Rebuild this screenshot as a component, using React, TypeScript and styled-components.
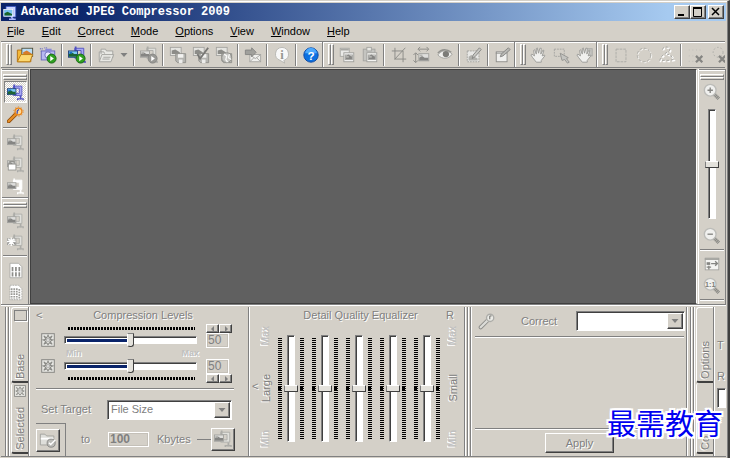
import React, { ReactNode } from "react";
import styled, { createGlobalStyle, css } from "styled-components";

const face = "#d4d0c8";
const shade = "#808080";
const dark = "#404040";
const navy = "#0a246a";
const ui = '"Liberation Sans", Arial, sans-serif';

const GlobalStyle = createGlobalStyle`
  *, *::before, *::after { box-sizing: border-box; }
  html, body { margin: 0; padding: 0; }
  body { background: ${face}; font: 11px/13px ${ui}; color: #000; }
  button, input, select { font: inherit; margin: 0; border-radius: 0; }
`;

const raised = css`
  border: 1px solid;
  border-color: #fff ${dark} ${dark} #fff;
  box-shadow: inset -1px -1px 0 ${shade};
`;
const sunken = css`
  border: 1px solid;
  border-color: ${shade} #fff #fff ${shade};
  box-shadow: inset 1px 1px 0 ${dark};
`;
const embossed = css`
  color: ${shade};
  text-shadow: 1px 1px 0 #fff;
`;

/* ---------- icons ---------- */

function Photo({ x = 1, y = 4, w = 10, h = 7, color = false }) {
  return (
    <g>
      <rect x={x} y={y} width={w} height={h} fill={color ? "#7cc8f4" : "#dededc"} stroke={color ? "#1c3c78" : "#a2a29e"} />
      <path
        d={`M${x + 0.5} ${y + h - 0.5}v-3l3-2 3 2 ${w - 7} 0v3z`}
        fill={color ? "#1c6434" : "#858583"}
      />
      <rect x={x + 1} y={y + 1} width={3} height={2} fill={color ? "#1870c8" : "#b4b4b0"} />
    </g>
  );
}

function Clamp({ color = false, pale = false }) {
  const edge = color ? "#5050c0" : pale ? "#fff" : "#acaca8";
  const fill = color ? "#a8a8f4" : pale ? "#fff" : "#e0e0dc";
  return (
    <g>
      <path d="M7.500 2.500h10v11h-10v-2.500h7v-6h-7z" fill={fill} stroke={edge} />
      <path d="M8.500 0.500v5M16 14v4" fill="none" stroke={edge} strokeWidth="2" />
      <path d="M12.500 19v-1.500h6.500V19" fill="none" stroke={edge} strokeWidth="1.500" />
      <Photo x={0.5} y={5.5} w={10} h={7} color={color} />
    </g>
  );
}

function Play({ color = false }) {
  return (
    <g>
      <circle cx="14" cy="14" r="5" fill={color ? "#30a020" : "#999996"} stroke={color ? "#146410" : "#858582"} />
      <path d="M12.500 11l4 3-4 3z" fill="#fff" />
    </g>
  );
}

function Floppy() {
  return (
    <g>
      <rect x="1.500" y="1.500" width="12" height="9" fill="#e4e4e0" stroke="#a4a4a0" />
      <path d="M3 9V5l4-1 5 3v2z" fill="#8c8c88" />
      <path d="M7.500 8.500h11v10h-9l-2-2z" fill="#b4b4b0" stroke="#8e8e8a" />
      <rect x="10" y="9" width="6" height="4" fill="#f2f2f0" />
      <rect x="11" y="15" width="4" height="4" fill="#ececea" />
    </g>
  );
}

const hand = (
  <path
    d="M7 18l-4-5-2-3 1-1 3 2-1-6 1-1 2 5V3l1-1 1.500 6L11 2.500l1.500 0L12 9l2.500-4.500 1 .5-2 6 2.500-1 .5 1-4 5v2z"
    fill="#f0f0ee"
    stroke="#999995"
  />
);

function Magnifier({ children }: { children: ReactNode }) {
  return (
    <g>
      <path d="M12.500 12.500l5 5" stroke="#8a8a86" strokeWidth="4" strokeDasharray="1.500 .5" />
      <circle cx="8" cy="8" r="6.500" fill="#f0f0ee" stroke="#bcbcb8" strokeWidth="1.500" />
      {children}
    </g>
  );
}

const icons: Record<string, ReactNode> = {
  app: (
    <g>
      <path d="M4 2h13v14h-7v-3h3V6H4z" fill="#c8d4ff" stroke="#3450c0" />
      <rect x="1" y="6" width="12" height="9" fill="#78c0f0" stroke="#fff" />
      <path d="M2 14v-3l4-2 6 3v2z" fill="#186428" />
      <path d="M8 19h9M11 16l3 3" stroke="#a8b4ff" strokeWidth="2" />
    </g>
  ),
  open: (
    <g>
      <path d="M1.500 17.500V4.500h5l2 2h8v11z" fill="#f4b838" stroke="#b06c10" />
      <rect x="6.500" y="2.500" width="12" height="9" fill="#b8dcf4" stroke="#50503c" />
      <path d="M8 11V7l4-2 6 4v2z" fill="#d87c28" />
      <path d="M1.500 17.500l4-8h13l-3 8z" fill="#fcd870" stroke="#b87810" />
    </g>
  ),
  camera: (
    <g>
      <path d="M1 3h3M6 2h3M2 6h2" stroke="#7070c0" strokeWidth="1.500" strokeDasharray="1 1" />
      <rect x="2.500" y="5.500" width="15" height="10" fill="#b8b8f0" stroke="#6464b8" />
      <rect x="7" y="3" width="7" height="3" fill="#8888d8" />
      <circle cx="10" cy="10" r="3.500" fill="#e8e8ff" stroke="#6464b8" />
      <Play color />
    </g>
  ),
  compress: <g><Clamp color /><Play color /></g>,
  folder: (
    <g fill="#e8e8e4" stroke="#a2a29e">
      <path d="M4.500 9V3.500h5l1 2h7V13M2.500 16V6.500h5l1 2" />
      <path d="M2.500 17.500l3-8h13l-3 8z" />
      <path d="M7 12.500h8M6 14.500h8" />
    </g>
  ),
  play: <g><Clamp /><Play /></g>,
  save: <Floppy />,
  saveCheck: <g><Floppy /><path d="M6 9l3 5 9-12" fill="none" stroke="#777774" strokeWidth="2" /></g>,
  saveWeb: (
    <g>
      <Floppy />
      <circle cx="13" cy="13" r="5.500" fill="#c4c4c0" stroke="#8c8c88" />
      <path d="M10 9l3 2-1 4 2 3M16 9l-1 4 3 2" stroke="#f8f8f6" strokeWidth="1.500" fill="none" />
    </g>
  ),
  mail: (
    <g>
      <rect x="6.500" y="9.500" width="12" height="8" fill="#f0f0ee" stroke="#a4a4a0" />
      <path d="M7 10l5.500 4 5.500-4M7 17l4-4M18 17l-4-4" fill="none" stroke="#a4a4a0" />
      <path d="M1.500 4.500h7V2l5 5-5 5V9.500h-7z" fill="#a0a09c" stroke="#858582" />
    </g>
  ),
  info: (
    <g>
      <path d="M10 1.500a8 7.500 0 0 1 2 14.500l1 3-5-3a8 7.500 0 0 1 2-14.500z" fill="#f8f8f8" stroke="#b4b4b0" />
      <text x="10" y="14" textAnchor="middle" fontFamily="Liberation Serif, serif" fontWeight="700" fontSize="14" fill="#969692">i</text>
    </g>
  ),
  help: (
    <g>
      <circle cx="10" cy="10" r="8" fill="#0c70e0" stroke="#0844a0" />
      <path d="M3.500 8a6.500 6 0 0 1 13 0z" fill="#4ca8fc" />
      <text x="10" y="15" textAnchor="middle" fontFamily="Liberation Sans, sans-serif" fontWeight="700" fontSize="13" fill="#fff">?</text>
    </g>
  ),
  copy: (
    <g>
      <rect x="2.500" y="2.500" width="10" height="9" fill="#eaeae8" stroke="#a8a8a4" />
      <path d="M3 4h9" stroke="#a8a8a4" strokeWidth="2" />
      <rect x="6.500" y="7.500" width="11" height="10" fill="#eee" stroke="#a0a09c" />
      <Photo x={8} y={10} w={8} h={5} />
    </g>
  ),
  paste: (
    <g>
      <rect x="2.500" y="3.500" width="13" height="13" fill="#c4c4c0" stroke="#a4a4a0" />
      <rect x="6.500" y="1.500" width="5" height="4" fill="#e8e8e4" stroke="#a4a4a0" />
      <rect x="6.500" y="7.500" width="11" height="10" fill="#f4f4f2" stroke="#a0a09c" />
      <Photo x={8} y={10} w={8} h={5} />
    </g>
  ),
  crop: <path d="M5.500 2v12.500H18M2 5.500h12.500V18M5 15L17 2" fill="none" stroke="#888884" />,
  resize: (
    <g>
      <Photo x={6.5} y={8.5} w={11} h={8} />
      <path d="M6 3.500h11M8 1L5.500 3.500 8 6M15 1l2.500 2.500L15 6M3 8v10M.5 10L3 7.500 5.500 10M.5 16L3 18.500 5.500 16" fill="none" stroke="#888884" />
    </g>
  ),
  eye: (
    <g>
      <path d="M2 10c4-6 11-6 16-1-4 6-11 6-16 1z" fill="#f0f0ee" stroke="#a0a09c" />
      <circle cx="11" cy="9" r="3.500" fill="#7c7c78" />
      <path d="M2 8c4-5 10-5 15-1" fill="none" stroke="#92928e" strokeWidth="1.500" />
    </g>
  ),
  penPhoto: (
    <g>
      <rect x="2.500" y="5.500" width="13" height="12" fill="#e8e8e6" stroke="#a0a09c" strokeDasharray="2 1" />
      <path d="M4 16v-4l3-2 7 4v2z" fill="#b0b0ac" />
      <path d="M8 14l1-4 7-8 2 2-7 8z" fill="#c8c8c4" stroke="#858582" />
    </g>
  ),
  penBox: (
    <g>
      <rect x="2.500" y="6.500" width="12" height="11" fill="#f0f0ee" stroke="#8c8c88" />
      <path d="M2 8h12" stroke="#8c8c88" />
      <path d="M7 12l1-3 8-7 2 2-8 7z" fill="#b8b8b4" stroke="#858582" />
    </g>
  ),
  hand,
  select: (
    <g>
      <rect x="1.500" y="3.500" width="11" height="8" fill="none" stroke="#a4a4a0" strokeDasharray="2 1" />
      <path d="M8 8l9 5-2 1 3 4-2 1-3-4-3 1z" fill="#c4c4c0" stroke="#92928e" />
    </g>
  ),
  handBox: <g><rect x="11" y="3" width="7" height="8" fill="#c4c4c0" stroke="#aaaaa6" />{hand}</g>,
  rect: <rect x="4.500" y="3.500" width="11" height="14" fill="none" stroke="#aaaaa6" strokeDasharray="3 1" />,
  ellipse: (
    <g fill="none" strokeDasharray="3 2">
      <circle cx="11" cy="11" r="7.500" stroke="#fff" />
      <circle cx="10" cy="10" r="7.500" stroke="#aaaaa6" />
    </g>
  ),
  lasso: (
    <g fill="none" strokeDasharray="3 2">
      <path d="M6 5a4 3 0 1 1 5 3c-3 2-7 4-8 9h11l4-1-3-5-4-1" stroke="#fff" strokeWidth="2" />
      <path d="M5 4a4 3 0 1 1 5 3c-3 2-7 4-8 9h11l4-1-3-5-4-1" stroke="#a4a4a0" />
    </g>
  ),
  clearRect: (
    <g>
      <path d="M2 4.500h14M2 11h8M2 17h8" stroke="#bcbcb8" strokeDasharray="1 3" />
      <path d="M10 11l7 7m0-7l-7 7" stroke="#858582" strokeWidth="2.500" />
    </g>
  ),
  clearLasso: (
    <g>
      <circle cx="9" cy="7" r="5.500" fill="none" stroke="#aaaaa6" strokeDasharray="2 2" />
      <path d="M10 11l7 7m0-7l-7 7" stroke="#858582" strokeWidth="2.500" />
    </g>
  ),
  clampOn: <Clamp color />,
  wand: (
    <g>
      <path d="M2 18L11 9" stroke="#94500c" strokeWidth="4.500" strokeLinecap="round" />
      <path d="M2 18L11 9" stroke="#e89028" strokeWidth="2.500" strokeLinecap="round" />
      <circle cx="13.500" cy="6.500" r="4" fill="#ffd898" stroke="#e88418" strokeWidth="1.500" />
      <circle cx="13.500" cy="6.500" r="5.500" fill="none" stroke="#e88418" strokeDasharray="1.500 2" />
      <path d="M12 9V6l2-2" stroke="#3848b0" strokeWidth="1.500" fill="none" />
    </g>
  ),
  clamp: <Clamp />,
  clampLock: (
    <g>
      <Clamp />
      <rect x="1.500" y="9.500" width="9" height="7" fill="#fff" stroke="#92928e" />
      <path d="M3.500 9V6.500h5V9" fill="none" stroke="#92928e" strokeWidth="1.500" />
    </g>
  ),
  clampPale: <Clamp pale />,
  clampSpark: (
    <g><Clamp /><path d="M5 4v10M0 9h10M1.500 5.500l7 7m0-7l-7 7" stroke="#fff" strokeWidth="1.500" /></g>
  ),
  page: (
    <g>
      <path d="M3.500 1.500h10l4 4v13h-14z" fill="#fff" stroke="#a8a8a4" />
      <path d="M6.500 6v11M10.500 6v11M14.500 6v11" stroke="#8c8c88" strokeWidth="2" strokeDasharray="5 1" />
    </g>
  ),
  pageDots: (
    <g>
      <path d="M3.500 1.500h10l4 4v13h-14z" fill="#fff" stroke="#a8a8a4" strokeDasharray="2 1" />
      <path d="M5.500 5v13M8.500 5v13M11.500 5v13M14.500 6v12" stroke="#9a9a96" strokeWidth="2" strokeDasharray="2 1" />
    </g>
  ),
  zoomIn: <Magnifier><path d="M8 5v6M5 8h6" stroke="#858582" strokeWidth="1.500" /></Magnifier>,
  zoomOut: <Magnifier><path d="M5 8h6" stroke="#858582" strokeWidth="1.500" /></Magnifier>,
  zoomOne: (
    <Magnifier>
      <text x="8" y="11" textAnchor="middle" fontFamily="Liberation Sans, sans-serif" fontWeight="700" fontSize="8" fill="#7c7c78">1:1</text>
    </Magnifier>
  ),
  fit: (
    <g>
      <rect x="2.500" y="3.500" width="15" height="13" fill="#f4f4f2" stroke="#a4a4a0" />
      <path d="M2 4.500h16" stroke="#a4a4a0" strokeWidth="2" />
      <rect x="4" y="8" width="4" height="3" fill="#858582" />
      <path d="M9 9.500h7M13.500 7l2.500 2.500-2.500 2.500M6.500 12v4M4 13.500h5" fill="none" stroke="#858582" strokeWidth="1.500" />
    </g>
  ),
  wrench: (
    <g>
      <path d="M3 17l8-8" stroke="#8c8c88" strokeWidth="4.500" strokeLinecap="round" />
      <path d="M3 17l8-8" stroke="#dcdcd8" strokeWidth="2.500" strokeLinecap="round" />
      <circle cx="13.500" cy="6.500" r="4" fill="#ecece8" stroke="#acaca8" strokeWidth="1.500" />
      <path d="M13 8V5l2-1" stroke="#8c8c88" strokeWidth="1.500" fill="none" />
    </g>
  ),
  flower: (
    <g fill="#e8e8e4" stroke="#8a8a86">
      <rect x="1" y="1" width="18" height="18" strokeWidth="1.500" />
      <path d="M10 3l2 4 4-3-3 5 4 1-4 2 3 4-4-2-2 3-2-3-4 2 3-4-4-2 4-1-3-5 4 3z" strokeWidth="1.500" />
      <circle cx="10" cy="10" r="2" fill="#fff" />
    </g>
  ),
  folderCheck: (
    <g>
      <path d="M1.500 15.500v-12h5l2 2h8v10z" fill="#dededa" stroke="#a0a09c" />
      <path d="M2 8.500h14" stroke="#fff" strokeWidth="2" />
      <circle cx="13.500" cy="13.500" r="4.500" fill="#bcbcb8" stroke="#858582" />
      <path d="M11 13l2 2 5-5" fill="none" stroke="#fff" strokeWidth="1.500" />
    </g>
  ),
};

const IconSvg = styled.svg<{ $size: number }>`
  display: block;
  flex: none;
  width: ${(p) => p.$size}px;
  height: ${(p) => p.$size}px;
`;
const Icon = ({ name, size = 18 }: { name: string; size?: number }) => (
  <IconSvg viewBox="0 0 20 20" $size={size} aria-hidden="true">{icons[name]}</IconSvg>
);

const Arrow = ({ dir }: { dir: "left" | "right" | "down" }) => (
  <IconSvg viewBox="0 0 8 8" $size={8} aria-hidden="true">
    <path d={{ left: "M5 1v6L2 4z", right: "M3 1v6L6 4z", down: "M0.500 2h7L4 6z" }[dir]} fill={shade} />
  </IconSvg>
);

/* ---------- window frame ---------- */

const AppWindow = styled.div`
  position: relative;
  display: flex;
  flex-direction: column;
  min-height: 100vh;
  padding: 1px 2px 1px 1px;
  overflow: hidden;
  background: ${face};
  border-top: 1px solid ${face};
  border-right: 2px solid ${dark};
  box-shadow: inset -1px 0 0 ${shade}, inset 0 1px 0 #fff;
`;

const TitleBar = styled.header`
  display: flex;
  align-items: center;
  height: 18px;
  margin-top: 1px;
  padding: 0 2px;
  gap: 3px;
  color: #fff;
  background: linear-gradient(90deg, ${navy} 10%, #a6caf0 92%);
`;
const AppTitle = styled.h1`
  flex: 1;
  margin: 0;
  font: 700 12px/18px "Liberation Mono", monospace;
  white-space: nowrap;
`;
const Caption = styled.div`
  display: flex;
`;
const CaptionButton = styled.button<{ $apart?: boolean }>`
  ${raised}
  display: grid;
  place-items: center;
  width: 16px;
  height: 14px;
  margin-left: ${(p) => (p.$apart ? 2 : 0)}px;
  padding: 0;
  background: ${face};
  svg { display: block; }
`;

const MenuBar = styled.nav`
  display: flex;
  gap: 17px;
  height: 20px;
  padding: 0 6px;
`;
const MenuItem = styled.button`
  padding: 0;
  border: 0;
  background: none;
  font-size: 11px;
  line-height: 20px;
`;

/* ---------- tool bars ---------- */

const ToolBar = styled.div`
  display: flex;
  height: 27px;
  margin-right: 1px;
  overflow: hidden;
  border-top: 1px solid ${shade};
  border-bottom: 1px solid ${shade};
  box-shadow: inset 0 1px 0 #fff;
`;
const Band = styled.div<{ $vertical?: boolean }>`
  display: flex;
  flex: none;
  flex-direction: ${(p) => (p.$vertical ? "column" : "row")};
  align-items: center;
  ${(p) =>
    p.$vertical
      ? css`
          border-top: 1px solid ${shade};
          box-shadow: inset 0 1px 0 #fff;
        `
      : css`
          border-right: 1px solid ${shade};
          box-shadow: inset 1px 1px 0 #fff;
        `}
`;
const bar = css`
  border: 1px solid;
  border-color: #fff ${shade} ${shade} #fff;
`;
const Grip = styled.span<{ $vertical?: boolean }>`
  display: flex;
  flex: none;
  flex-direction: ${(p) => (p.$vertical ? "column" : "row")};
  ${(p) => (p.$vertical ? "width: 24px; height: 11px; padding: 4px 0 1px;" : "width: 12px; height: 21px; padding: 0 1px 0 5px;")}
  &::before, &::after { content: ""; flex: 1; ${bar} }
`;
const ToolButton = styled.button<{ $rail?: boolean; $on?: boolean }>`
  display: grid;
  place-items: center;
  flex: none;
  width: 23px;
  height: ${(p) => (p.$rail ? 22 : 24)}px;
  padding: 0;
  border: 0;
  background: none;
  ${(p) =>
    p.$on &&
    css`
      border: 1px solid;
      border-color: ${shade} #fff #fff ${shade};
      background: repeating-conic-gradient(#fff 0 25%, ${face} 0 50%) 0 0 / 2px 2px;
    `}
`;
const DropButton = styled(ToolButton)`
  width: 14px;
`;
const Rule = styled.span<{ $vertical?: boolean }>`
  flex: none;
  ${(p) =>
    p.$vertical
      ? css`width: 2px; height: 22px; margin: 0 2px; border-left: 1px solid ${shade}; border-right: 1px solid #fff;`
      : css`width: 24px; height: 2px; margin: 2px 0; border-top: 1px solid ${shade}; border-bottom: 1px solid #fff;`}
`;

const Work = styled.main`
  display: flex;
  flex: 1 0 234px;
  margin-top: 1px;
`;
const Rail = styled.aside`
  flex: none;
  display: flex;
  flex-direction: column;
  width: 28px;
  border-left: 1px solid #fff;
  border-right: 1px solid ${shade};
`;
const Canvas = styled.section`
  flex: 1;
  margin: 0 1px;
  background: #606060;
  border: 1px solid ${dark};
  border-right-color: #fff;
`;

/* ---------- sliders ---------- */

const ZoomSlider = styled.input`
  appearance: none;
  writing-mode: vertical-lr;
  direction: rtl;
  width: 16px;
  height: 110px;
  margin: 6px 0;
  background: none;
  &::-webkit-slider-runnable-track {
    width: 8px;
    height: 110px;
    margin: 0 auto;
    background: #fff;
    ${sunken}
  }
  &::-webkit-slider-thumb {
    appearance: none;
    width: 14px;
    height: 7px;
    margin-left: -4px;
    background: #e4e2dc;
    border: 1px solid;
    border-color: #fff ${dark} ${dark} ${shade};
  }
`;
const LevelSlider = styled.input`
  appearance: none;
  display: block;
  min-width: 0;
  width: 100%;
  height: 14px;
  background: none;
  &::-webkit-slider-runnable-track {
    height: 8px;
    border: 1px solid;
    border-color: ${shade} #fff #fff ${shade};
    background:
      linear-gradient(${navy}, ${navy}) 2px 2px / 50% 3px no-repeat,
      #fff;
    box-shadow: inset 1px 1px 0 ${dark};
  }
  &::-webkit-slider-thumb {
    appearance: none;
    width: 7px;
    height: 14px;
    margin-top: -4px;
    background: #e4e2dc;
    border: 1px solid;
    border-color: ${shade} ${dark} ${dark} #fff;
    border-radius: 1px 1px 3px 3px;
  }
`;
const BandSlider = styled(ZoomSlider)`
  width: 14px;
  height: 107px;
  margin: 0;
  &::-webkit-slider-runnable-track { height: 107px; }
`;

/* ---------- lower dock ---------- */

const Dock = styled.section`
  display: grid;
  grid-template-columns: 29px minmax(0, 219fr) minmax(0, 216fr) minmax(0, 222fr) 39px;
  height: 153px;
  border-top: 1px solid ${shade};
  border-bottom: 1px solid ${shade};
  box-shadow: inset 0 1px 0 #fff;
`;
const TabStrip = styled.div`
  display: flex;
  padding: 2px 0 1px 4px;
`;
const TabGrip = styled.span`
  flex: none;
  width: 4px;
  margin-right: 2px;
  border-left: 1px solid ${shade};
  border-right: 1px solid ${shade};
  box-shadow: inset 1px 0 0 #fff, 1px 0 0 #fff;
`;
const Tabs = styled.div`
  display: flex;
  flex: none;
  flex-direction: column;
  width: 18px;
  border-right: 1px solid ${shade};
  box-shadow: 1px 0 0 #fff;
`;
const Tab = styled.button<{ $active?: boolean }>`
  display: flex;
  flex-direction: column;
  align-items: center;
  justify-content: space-between;
  height: ${(p) => (p.$active ? 76 : 71)}px;
  padding: 2px 0;
  overflow: hidden;
  border: 0;
  border-left: 1px solid #fff;
  border-top: ${(p) => (p.$active ? "1px solid #fff" : "0")};
  border-bottom: 2px solid ${dark};
  border-radius: 3px 0 0 3px;
  background: none;
`;
const TabMark = styled.span`
  width: 13px;
  height: 11px;
  border: 1px solid ${shade};
  box-shadow: 1px 1px 0 #fff;
`;
const Sideways = styled.span<{ $ghost?: boolean }>`
  writing-mode: vertical-rl;
  transform: rotate(180deg);
  color: ${(p) => (p.$ghost ? "#c0c0c0" : shade)};
  text-shadow: -1px -1px 0 #fff;
  font-size: ${(p) => (p.$ghost ? 10 : 11)}px;
  font-weight: ${(p) => (p.$ghost ? 700 : 400)};
  line-height: 14px;
`;

const Panel = styled.section`
  display: flex;
  flex-direction: column;
  min-width: 0;
  margin: 2px 0 1px;
  border-right: 1px solid ${shade};
  box-shadow: 1px 0 0 #fff;
`;
const PanelHead = styled.div`
  display: grid;
  grid-template-columns: 20px 1fr 18px;
  align-items: center;
  flex: none;
  height: 16px;
  padding-left: 6px;
  text-align: center;
  ${embossed}
`;
const PanelTitle = styled.h2`
  margin: 0;
  font: 400 11px/16px ${ui};
  white-space: nowrap;
`;
const FlatButton = styled.button`
  padding: 0;
  border: 0;
  background: none;
  text-align: left;
  ${embossed}
`;
const PlainIcon = styled(FlatButton)`
  display: block;
  height: 14px;
`;
const Levels = styled.div`
  display: grid;
  grid-template-columns: 14px minmax(0, 1fr) 26px;
  grid-template-rows: 10px 14px 12px 14px 10px;
  column-gap: 9px;
  align-items: center;
  padding: 0 16px 0 11px;
`;
const Ticks = styled.span`
  grid-column: 2;
  height: 3px;
  margin: 0 2px 0 4px;
  background: repeating-linear-gradient(90deg, #000 0 2px, transparent 2px 3px);
`;
const Ends = styled.span`
  display: flex;
  grid-column: 1 / -1;
  justify-content: space-between;
  padding: 0 33px 0 25px;
  font: 700 9px/11px ${ui};
  color: #c0c0c0;
  text-shadow: 1px 1px 0 #fff;
`;
const Spinner = styled.span`
  display: flex;
  grid-column: 3;
`;
const SpinButton = styled.button`
  ${raised}
  display: grid;
  place-items: center;
  width: 13px;
  height: 9px;
  padding: 0;
  overflow: hidden;
  background: ${face};
`;
const NumberBox = styled.input<{ $bold?: boolean }>`
  width: ${(p) => (p.$bold ? 41 : 23)}px;
  height: 15px;
  padding: 0 1px;
  border: 1px solid #fff;
  outline: 1px solid #c4c0b8;
  outline-offset: -2px;
  background: ${face};
  color: ${shade};
  font-size: 12px;
  font-weight: ${(p) => (p.$bold ? 700 : 400)};
`;
const Divider = styled.hr<{ $wide?: boolean }>`
  flex: none;
  width: calc(100% - ${(p) => (p.$wide ? 4 : 20)}px);
  height: 2px;
  margin: 0 0 0 ${(p) => (p.$wide ? 2 : 6)}px;
  border: 0;
  border-top: 1px solid ${shade};
  border-bottom: 1px solid #fff;
`;
const Row = styled.div<{ $pad: string; $gap?: number; $h: number }>`
  display: flex;
  flex: none;
  align-items: center;
  gap: ${(p) => p.$gap ?? 0}px;
  height: ${(p) => p.$h}px;
  padding: ${(p) => p.$pad};
`;
const Label = styled.label<{ $w?: number }>`
  flex: none;
  width: ${(p) => (p.$w ? `${p.$w}px` : "auto")};
  white-space: nowrap;
  ${embossed}
`;
const Combo = styled.span`
  ${sunken}
  display: flex;
  flex: 1;
  min-width: 0;
  height: 20px;
  padding: 1px;
  background: #fff;
`;
const ComboSelect = styled.select`
  appearance: none;
  flex: 1;
  min-width: 0;
  padding: 0 2px;
  border: 0;
  background: #fff;
  color: ${shade};
  opacity: 1;
`;
const ComboArrow = styled.span`
  ${raised}
  display: grid;
  place-items: center;
  width: 16px;
  background: ${face};
`;
const PushButton = styled.button<{ $w: number; $h: number }>`
  ${raised}
  display: grid;
  place-items: center;
  flex: none;
  width: ${(p) => p.$w}px;
  height: ${(p) => p.$h}px;
  padding: 0;
  background: ${face};
  ${embossed}
`;
const Framed = styled.span`
  flex: none;
  width: 30px;
  height: 33px;
  padding-top: 5px;
  border-top: 1px solid ${shade};
  border-right: 1px solid ${shade};
`;
const Link = styled.span`
  flex: 1;
  height: 1px;
  margin-left: 6px;
  background: ${shade};
`;

const Equalizer = styled.div`
  display: flex;
  flex: 1;
  align-items: center;
  padding: 0 4px 6px 3px;
`;
const SideLabels = styled.div`
  display: flex;
  flex: none;
  flex-direction: column;
  align-items: center;
  justify-content: space-between;
  width: 15px;
  height: 121px;
`;
const Faders = styled.div`
  display: flex;
  flex: 1;
  justify-content: space-between;
  padding: 3px 5px 0;
`;
const Fader = styled.div`
  display: flex;
  align-items: center;
  gap: 2px;
`;
const Scale = styled.span`
  width: 4px;
  height: 101px;
  background:
    linear-gradient(#000, #000) 0 50% / 3px 5px no-repeat,
    repeating-linear-gradient(#000 0 1px, transparent 1px 2px);
`;
const CorrectPanel = styled(Panel)`
  flex-direction: row;
  padding-left: 2px;
`;
const CorrectBody = styled.div`
  display: flex;
  flex: 1;
  flex-direction: column;
  min-width: 0;
`;
const Spacer = styled.div`
  flex: 1;
`;
const Clipped = styled.div`
  display: flex;
  flex-direction: column;
  flex: 1;
  overflow: hidden;
  gap: 18px;
  padding: 32px 0 0 3px;
  ${embossed}
`;
const EdgeField = styled.input`
  ${sunken}
  flex: none;
  width: 100%;
  height: 20px;
  margin-top: -13px;
  padding: 0;
  background: #fff;
`;
const OptionsStrip = styled(TabStrip)`
  padding-left: 3px;
  overflow: hidden;
`;

const Watermark = styled.div`
  position: absolute;
  right: 5px;
  bottom: 18px;
  font: 400 29px/36px "Noto Sans CJK SC", sans-serif;
  color: #0000f0;
  text-shadow: 2px 0 #fff, -2px 0 #fff, 0 2px #fff, 0 -2px #fff, 2px 2px #fff, -2px -2px #fff, 2px -2px #fff,
    -2px 2px #fff, 0 0 3px #fff;
  pointer-events: none;
`;

const menus = ["File", "Edit", "Correct", "Mode", "Options", "View", "Window", "Help"];
const toolBands = [
  ["open", "camera", "|", "compress", "|", "folder", "v", "|", "play", "|", "save", "saveCheck", "saveWeb", "|", "mail", "|", "info", "|", "help"],
  ["copy", "paste", "|", "crop", "resize", "eye", "|", "penPhoto", "|", "penBox"],
  ["hand", "select", "handBox"],
  ["rect", "ellipse", "lasso", "|", "clearRect", "clearLasso"],
];
const railBands = [
  ["clampOn", "wand", "|", "clamp", "clampLock", "clampPale"],
  ["clamp", "clampSpark", "|", "page", "pageDots"],
];

const Spin = ({ name }: { name: string }) => (
  <Spinner>
    <SpinButton aria-label={`Decrease ${name}`}><Arrow dir="left" /></SpinButton>
    <SpinButton aria-label={`Increase ${name}`}><Arrow dir="right" /></SpinButton>
  </Spinner>
);

const Level = ({ name }: { name: string }) => (
  <>
    <PlainIcon aria-label={`${name} preset`}><Icon name="flower" size={14} /></PlainIcon>
    <LevelSlider type="range" aria-label={`${name} level`} defaultValue={50} />
    <NumberBox aria-label={`${name} value`} defaultValue="50" />
  </>
);

export default function App() {
  return (
    <AppWindow>
      <GlobalStyle />
      <TitleBar>
        <Icon name="app" size={15} />
        <AppTitle>Advanced JPEG Compressor 2009</AppTitle>
        <Caption>
          <CaptionButton aria-label="Minimize">
            <svg width="10" height="10"><path d="M1 8h6" stroke="#000" strokeWidth="2" /></svg>
          </CaptionButton>
          <CaptionButton aria-label="Maximize">
            <svg width="10" height="10"><path d="M.5 1v8.500h8V1M0 1h9" fill="none" stroke="#000" /><path d="M0 1h9" stroke="#000" strokeWidth="2" /></svg>
          </CaptionButton>
          <CaptionButton aria-label="Close" $apart>
            <svg width="10" height="10"><path d="M1 1l7 7M8 1L1 8" stroke="#000" strokeWidth="1.500" /></svg>
          </CaptionButton>
        </Caption>
      </TitleBar>

      <MenuBar aria-label="Main menu">
        {menus.map((m) => (
          <MenuItem key={m}><u>{m[0]}</u>{m.slice(1)}</MenuItem>
        ))}
      </MenuBar>

      <ToolBar role="toolbar" aria-label="Tools">
        {toolBands.map((band, b) => (
          <Band key={b}>
            <Grip />
            {band.map((t, i) =>
              t === "|" ? <Rule key={i} $vertical />
                : t === "v" ? <DropButton key={i} aria-label="Recent files"><Arrow dir="down" /></DropButton>
                : <ToolButton key={i} aria-label={t}><Icon name={t} /></ToolButton>
            )}
          </Band>
        ))}
      </ToolBar>

      <Work>
        <Rail>
          {railBands.map((band, b) => (
            <Band key={b} $vertical>
              <Grip $vertical />
              {band.map((t, i) =>
                t === "|" ? <Rule key={i} />
                  : <ToolButton key={i} $rail $on={t === "clampOn"} aria-label={t}><Icon name={t} size={17} /></ToolButton>
              )}
            </Band>
          ))}
        </Rail>
        <Canvas aria-label="Image" />
        <Rail>
          <Band $vertical>
            <Grip $vertical />
            <ToolButton $rail aria-label="Zoom in"><Icon name="zoomIn" /></ToolButton>
            <ZoomSlider type="range" aria-label="Zoom" defaultValue={50} />
            <ToolButton $rail aria-label="Zoom out"><Icon name="zoomOut" /></ToolButton>
            <Rule />
            <ToolButton $rail aria-label="Fit"><Icon name="fit" /></ToolButton>
            <ToolButton $rail aria-label="Actual size"><Icon name="zoomOne" /></ToolButton>
            <Rule />
          </Band>
        </Rail>
      </Work>

      <Dock>
        <TabStrip>
          <TabGrip />
          <Tabs>
            <Tab $active><TabMark /><Sideways>Base</Sideways></Tab>
            <Tab><Icon name="flower" size={12} /><Sideways>Selected</Sideways></Tab>
          </Tabs>
        </TabStrip>

        <Panel>
          <PanelHead>
            <FlatButton aria-label="Collapse levels">&lt;</FlatButton>
            <PanelTitle>Compression Levels</PanelTitle>
          </PanelHead>
          <Levels>
            <Ticks /><Spin name="luminance" />
            <Level name="Luminance" />
            <Ends><span>Min</span><span>Max</span></Ends>
            <Level name="Chrominance" />
            <Ticks /><Spin name="chrominance" />
          </Levels>
          <Row $h={9} $pad="3px 0 0"><Divider /></Row>
          <Row $h={27} $pad="8px 16px 0 11px">
            <Label htmlFor="target" $w={66}>Set Target</Label>
            <Combo>
              <ComboSelect id="target" defaultValue="File Size"><option>File Size</option></ComboSelect>
              <ComboArrow><Arrow dir="down" /></ComboArrow>
            </Combo>
          </Row>
          <Row $h={37} $pad="3px 13px 0 6px">
            <Framed><PushButton $w={24} $h={23} aria-label="Apply target"><Icon name="folderCheck" /></PushButton></Framed>
            <Row $h={33} $pad="0 0 0 15px" $gap={8}>
              <Label htmlFor="size" $w={19}>to</Label>
              <NumberBox id="size" $bold defaultValue="100" />
              <Label htmlFor="size">Kbytes</Label>
            </Row>
            <Link />
            <PushButton $w={24} $h={23} aria-label="Compress to target"><Icon name="clamp" /></PushButton>
          </Row>
        </Panel>

        <Panel>
          <PanelHead><span /><PanelTitle>Detail Quality Equalizer</PanelTitle><FlatButton>R</FlatButton></PanelHead>
          <Equalizer>
            <FlatButton aria-label="Collapse equalizer">&lt;</FlatButton>
            <SideLabels>
              <Sideways $ghost>Max</Sideways><Sideways>Large</Sideways><Sideways $ghost>Min</Sideways>
            </SideLabels>
            <Faders>
              {[1, 2, 3, 4, 5].map((n) => (
                <Fader key={n}>
                  <Scale />
                  <BandSlider type="range" aria-label={`Detail band ${n}`} defaultValue={50} />
                  <Scale />
                </Fader>
              ))}
            </Faders>
            <SideLabels>
              <Sideways $ghost>Max</Sideways><Sideways>Small</Sideways><Sideways $ghost>Min</Sideways>
            </SideLabels>
          </Equalizer>
        </Panel>

        <CorrectPanel>
          <TabGrip />
          <CorrectBody>
            <Row $h={28} $pad="0 1px 0 5px">
              <Icon name="wrench" size={18} />
              <Row $h={28} $pad="0 19px 0 25px"><Label htmlFor="correct">Correct</Label></Row>
              <Combo>
                <ComboSelect id="correct"><option></option></ComboSelect>
                <ComboArrow><Arrow dir="down" /></ComboArrow>
              </Combo>
            </Row>
            <Row $h={4} $pad="0"><Divider $wide /></Row>
            <Spacer />
            <Divider $wide />
            <Row $h={26} $pad="0 0 0 72px"><PushButton $w={69} $h={20}>Apply</PushButton></Row>
          </CorrectBody>
        </CorrectPanel>

        <OptionsStrip>
          <TabGrip />
          <Tabs>
            <Tab $active><span /><Sideways>Options</Sideways></Tab>
            <Tab><span /><Sideways>Co</Sideways></Tab>
          </Tabs>
          <Clipped><span>T</span><span>R</span><EdgeField aria-label="Option value" /></Clipped>
        </OptionsStrip>
      </Dock>

      <Watermark>最需教育</Watermark>
    </AppWindow>
  );
}
